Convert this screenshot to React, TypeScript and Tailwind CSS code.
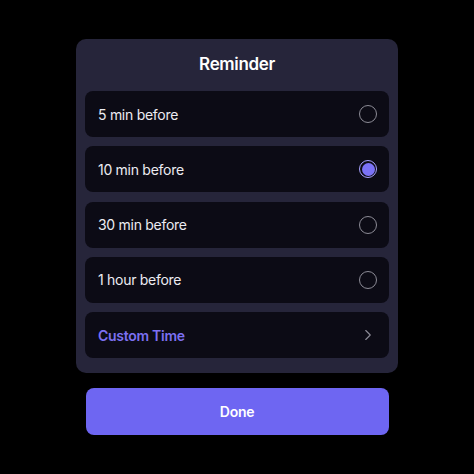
import { ChevronRight } from "lucide-react";

interface OptionRowProps {
    label: string;
    selected?: boolean;
};

const OptionRow: React.FC<OptionRowProps> = ({ label, selected }) => {
    return (
        <div className="flex h-[46px] items-center justify-between rounded-lg bg-[#0c0b15] pl-[13px] pr-[12px]">
            <span className="text-[14px] tracking-[-0.02em] text-[#ececf2]">{ label }</span>
            {selected ? (
                <span className="flex h-[18px] w-[18px] items-center justify-center rounded-full border-[1.5px] border-[#a8a2ff]">
                    <span className="h-[13px] w-[13px] rounded-full bg-[#7b72f6]"></span>
                </span>
            ) : (
                <span className="h-[18px] w-[18px] rounded-full border-[1.5px] border-[#8c8b96]"></span>
            )}
        </div>
    );
}

const options = ["5 min before", "10 min before", "30 min before", "1 hour before"];

export default function App() {
    return (
        <div className="flex h-[474px] w-[474px] flex-col items-center bg-black pt-[39px] font-['Inter',sans-serif]">
            <div className="flex w-[322px] flex-col rounded-[10px] bg-[#26253a] px-[9px] pb-[15px]">
                <h2 className="flex h-[52px] items-center justify-center pb-[1px] text-[17px] font-semibold tracking-[-0.02em] text-white">Reminder</h2>
                <div className="flex flex-col gap-[9.3px]">
                    {options.map((o, i) => (
                        <OptionRow key={o} label={o} selected={i === 1} />
                    ))}
                    <div className="flex h-[46px] items-center justify-between rounded-lg bg-[#0c0b15] pl-[13px] pr-[12px]">
                        <span className="text-[14px] font-semibold tracking-[-0.02em] text-[#7c70f2]">Custom Time</span>
                        <ChevronRight className="h-[18px] w-[18px] text-[#8c8b96]" strokeWidth={1.5} />
                    </div>
                </div>
            </div>
            <button className="mt-[15px] h-[47px] w-[303px] rounded-lg bg-[#6e66f2] text-[14px] font-semibold tracking-[-0.02em] text-white">
                Done
            </button>
        </div>
    );
}
